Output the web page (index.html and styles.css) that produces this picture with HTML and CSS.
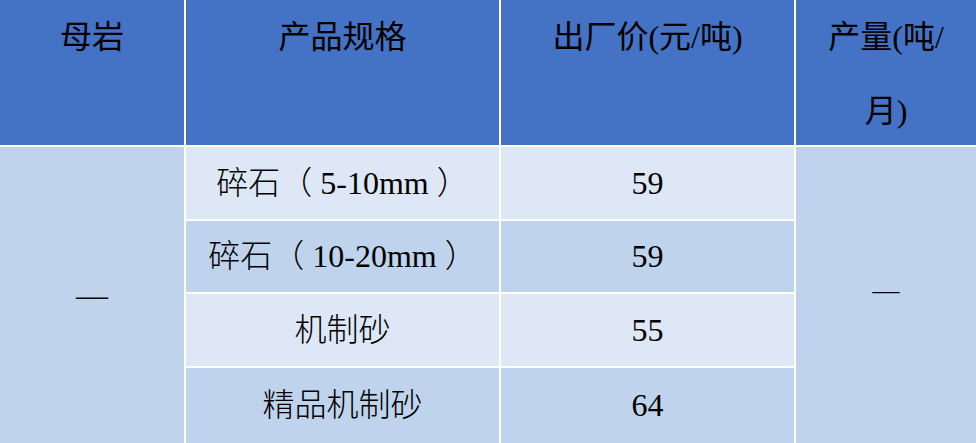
FILE: index.html
```html
<!DOCTYPE html>
<html lang="zh-CN">
<head>
<meta charset="utf-8">
<title>产品价格表</title>
<link rel="stylesheet" href="styles.css">
</head>
<body>
<div class="table">
  <div class="th">母岩</div>
  <div class="th">产品规格</div>
  <div class="th">出厂价(元/吨)</div>
  <div class="th">产量(吨/<br>月)</div>

  <div class="td side left">—</div>
  <div class="td light">碎石（ 5-10mm ）</div>
  <div class="td light">59</div>
  <div class="td side right"><span class="dash-small">—</span></div>

  <div class="td dark">碎石（ 10-20mm ）</div>
  <div class="td dark">59</div>

  <div class="td light">机制砂</div>
  <div class="td light">55</div>

  <div class="td dark">精品机制砂</div>
  <div class="td dark">64</div>
</div>
</body>
</html>
```
FILE: styles.css
```css
html, body {
  margin: 0;
  padding: 0;
  background: #ffffff;
}
body {
  width: 976px;
  height: 443px;
  overflow: hidden;
}
.table {
  display: grid;
  grid-template-columns: 184px 313px 293px 180px;
  grid-template-rows: 145px 72px 71px 72px 75px;
  gap: 2px;
  background: #ffffff;
  font-family: "Liberation Serif", "Noto Sans CJK SC", serif;
  font-size: 32px;
  color: #000000;
}
.th {
  background: #4472c4;
  text-align: center;
  line-height: 74px;
  padding-top: 0;
}
.td {
  display: flex;
  align-items: center;
  justify-content: center;
  text-align: center;
  line-height: 1.2;
  font-weight: 300;
  white-space: pre;
}
.light {
  background: #dde7f5;
}
.dark {
  background: #bfd4ec;
}
.side {
  background: #bfd4ec;
  grid-row: 2 / span 4;
}
.left {
  grid-column: 1;
}
.right {
  grid-column: 4;
}
.dash-small {
  font-size: 27px;
  margin-bottom: 10px;
}
```
